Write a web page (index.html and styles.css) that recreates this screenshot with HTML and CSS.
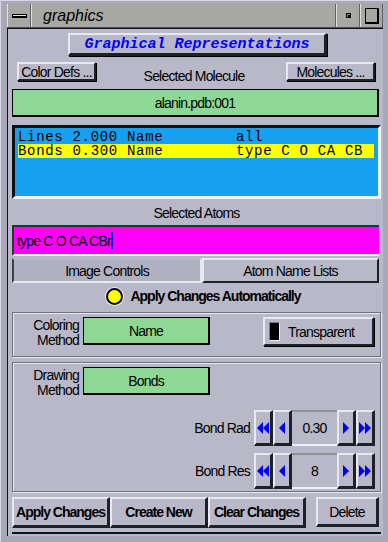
FILE: index.html
```html
<!DOCTYPE html>
<html lang="en">
<head>
  <meta charset="UTF-8" />
  <title>graphics</title>
  <link rel="stylesheet" href="styles.css">
</head>
<body>
  <div class="window">
    <!-- Title Bar -->
    <div class="titlebar">
      <div class="tb-btn tb-menu"><span class="bar"></span></div>
      <div class="tb-title">graphics</div>
      <div class="tb-btn tb-min"><span class="dot"></span></div>
      <div class="tb-btn tb-max"><span class="box"></span></div>
    </div>

    <!-- Content -->
    <div class="content">
      <div class="head-row">
        <div class="btn head-btn">Graphical Representations</div>
      </div>

      <div class="mol-row">
        <div class="btn small-btn">Color Defs ...</div>
        <div class="label mol-label">Selected Molecule</div>
        <div class="btn small-btn mol-btn">Molecules ...</div>
      </div>

      <div class="green-field wide">alanin.pdb:001</div>

      <div class="list">
        <div class="list-row">Lines 2.000 Name        all</div>
        <div class="list-row selected">Bonds 0.300 Name        type C O CA CB</div>
      </div>

      <div class="label atoms-label">Selected Atoms</div>

      <div class="text-field">type C O CA CBr<span class="cursor"></span></div>

      <div class="tabs">
        <div class="tab active">Image Controls</div>
        <div class="tab">Atom Name Lists</div>
      </div>

      <div class="radio-row">
        <span class="radio"></span>
        <span class="bold">Apply Changes Automatically</span>
      </div>

      <div class="group group-color">
        <div class="method-row">
          <div class="label method-label">Coloring<br>Method</div>
          <div class="green-field method-btn">Name</div>
          <div class="btn toggle"><span class="indicator"></span>Transparent</div>
        </div>
      </div>

      <div class="group group-draw">
        <div class="method-row">
          <div class="label method-label">Drawing<br>Method</div>
          <div class="green-field method-btn">Bonds</div>
        </div>

        <div class="spin-row">
          <div class="label spin-label">Bond Rad</div>
          <div class="spinner">
            <div class="btn spin-btn"><svg width="12" height="12" viewBox="0 0 12 12"><path d="M6 0 L0 6 L6 12 Z M12 0 L6 6 L12 12 Z" fill="#0000ff"/></svg></div>
            <div class="btn spin-btn"><svg width="6" height="12" viewBox="0 0 6 12"><path d="M6 0 L0 6 L6 12 Z" fill="#0000ff"/></svg></div>
            <div class="spin-value">0.30</div>
            <div class="btn spin-btn"><svg width="6" height="12" viewBox="0 0 6 12"><path d="M0 0 L6 6 L0 12 Z" fill="#0000ff"/></svg></div>
            <div class="btn spin-btn"><svg width="12" height="12" viewBox="0 0 12 12"><path d="M0 0 L6 6 L0 12 Z M6 0 L12 6 L6 12 Z" fill="#0000ff"/></svg></div>
          </div>
        </div>

        <div class="spin-row">
          <div class="label spin-label">Bond Res</div>
          <div class="spinner">
            <div class="btn spin-btn"><svg width="12" height="12" viewBox="0 0 12 12"><path d="M6 0 L0 6 L6 12 Z M12 0 L6 6 L12 12 Z" fill="#0000ff"/></svg></div>
            <div class="btn spin-btn"><svg width="6" height="12" viewBox="0 0 6 12"><path d="M6 0 L0 6 L6 12 Z" fill="#0000ff"/></svg></div>
            <div class="spin-value">8</div>
            <div class="btn spin-btn"><svg width="6" height="12" viewBox="0 0 6 12"><path d="M0 0 L6 6 L0 12 Z" fill="#0000ff"/></svg></div>
            <div class="btn spin-btn"><svg width="12" height="12" viewBox="0 0 12 12"><path d="M0 0 L6 6 L0 12 Z M6 0 L12 6 L6 12 Z" fill="#0000ff"/></svg></div>
          </div>
        </div>
      </div>

      <div class="actions">
        <div class="btn act-btn bold">Apply Changes</div>
        <div class="btn act-btn bold">Create New</div>
        <div class="btn act-btn bold">Clear Changes</div>
        <div class="btn act-btn delete">Delete</div>
      </div>
    </div>
  </div>
</body>
</html>
```

FILE: styles.css
```css
* {
  margin: 0;
  padding: 0;
  box-sizing: border-box;
}

body {
  width: 388px;
  height: 542px;
  overflow: hidden;
  background: #a4a4b4;
  font-family: 'Liberation Sans', Arial, sans-serif;
  font-size: 14px;
  letter-spacing: -0.8px;
  color: #000;
}

/* Window frame */
.window {
  width: 388px;
  height: 542px;
  padding: 3px 5px 6px 6px;
  display: flex;
  flex-direction: column;
  background: #a8a8b8;
  border-left: 1px solid #d8d8e4;
  border-top: 1px solid #d8d8e4;
}

.titlebar {
  height: 24px;
  display: flex;
  background: #a8a8a2;
  border-bottom: 1px solid #505058;
}

.tb-btn {
  width: 24px;
  display: flex;
  align-items: center;
  justify-content: center;
  border-left: 1px solid #e0e0e0;
  border-right: 1px solid #606068;
}

.tb-menu .bar {
  width: 15px;
  height: 4px;
  border: 1px solid #000;
  background: #e8e8e8;
  border-bottom-width: 2px;
}

.tb-title {
  flex: 1;
  padding-left: 11px;
  font-style: italic;
  font-size: 16px;
  letter-spacing: 0;
  line-height: 24px;
  border-left: 1px solid #e0e0e0;
  border-right: 1px solid #606068;
}

.tb-min .dot {
  width: 5px;
  height: 5px;
  background: #000;
  border: 1px solid #000;
  box-shadow: inset 1px 1px 0 #888;
}

.tb-max {
  width: 23px;
}

.tb-max .box {
  width: 14px;
  height: 16px;
  border: 1px solid #000;
  border-right-width: 2px;
  border-bottom-width: 2px;
}

/* Content area */
.content {
  flex: 1;
  background: #b8b8c8;
  border-top: 1px solid #101018;
  border-left: 1px solid #101018;
  display: flex;
  flex-direction: column;
  padding: 4px 2px 0 4px;
}

/* Bevel button */
.btn {
  background: #b8b8c8;
  border: 2px solid;
  border-color: #e8e8f0 #202028 #202028 #e8e8f0;
  box-shadow: 1px 1px 0 #000;
  display: flex;
  align-items: center;
  justify-content: center;
  white-space: nowrap;
}

.label {
  white-space: nowrap;
}

.bold {
  font-weight: bold;
  letter-spacing: -1px;
}

.head-row {
  display: flex;
  justify-content: center;
  padding-left: 2px;
}

.head-btn {
  width: 259px;
  height: 23px;
  font-family: 'Liberation Mono', monospace;
  font-weight: bold;
  font-style: italic;
  font-size: 15px;
  letter-spacing: 0;
  color: #0000ff;
  border-right-width: 3px;
  border-bottom-width: 3px;
}

.mol-row {
  display: flex;
  align-items: flex-end;
  justify-content: space-between;
  margin-top: 6px;
  padding: 0 6px 0 5px;
}

.small-btn {
  width: 79px;
  height: 19px;
}

.mol-btn {
  width: 89px;
}

.mol-label {
  line-height: 14px;
  margin-bottom: -2px;
  padding-left: 6px;
}

.green-field {
  background: #8cd894;
  border: 1px solid #000;
  border-right-width: 2px;
  border-bottom-width: 2px;
  display: flex;
  align-items: center;
  justify-content: center;
}

.wide {
  height: 28px;
  margin-top: 8px;
  margin-right: 2px;
}

/* List */
.list {
  height: 74px;
  margin-top: 8px;
  background: #18a0f0;
  border: 3px solid;
  border-color: #101018 #f0f0f8 #f0f0f8 #101018;
  padding: 2px 4px 0 3px;
  font-family: 'Liberation Mono', monospace;
  font-size: 14px;
  letter-spacing: 0.68px;
}

.list-row {
  height: 14px;
  line-height: 14px;
  white-space: pre;
}

.list-row.selected {
  background: #ffff00;
}

.atoms-label {
  text-align: center;
  margin-top: 6px;
  line-height: 16px;
}

.text-field {
  height: 31px;
  margin-top: 4px;
  margin-right: 2px;
  background: #ff00ff;
  border-top: 2px solid #303038;
  border-left: 2px solid #303038;
  border-bottom: 2px solid #f0f0f8;
  display: flex;
  align-items: center;
  padding-left: 3px;
}

.cursor {
  width: 2px;
  height: 17px;
  background: #0000ff;
}

/* Tabs */
.tabs {
  display: flex;
  height: 25px;
  margin-top: 2px;
  margin-right: 2px;
}

.tab {
  flex: 1;
  display: flex;
  align-items: center;
  justify-content: center;
  border: 2px solid;
  border-color: #e8e8f0 #202028 #202028 #e8e8f0;
}

.tab.active {
  flex: 0 0 190px;
  background: #b0b0c0;
  border-color: #b8b8c8 #e8e8f0 #e8e8f0 #404048;
}

.radio-row {
  display: flex;
  align-items: center;
  justify-content: center;
  gap: 7px;
  height: 26px;
  padding-left: 14px;
}

.radio {
  width: 17px;
  height: 17px;
  border-radius: 50%;
  background: #ffff00;
  border: 2px solid #000;
  box-shadow: 0 0 0 1px #f0f0f8;
}

/* Groups */
.group {
  border: 1px solid #707080;
  box-shadow: inset 1px 1px 0 #e8e8f0, 1px 1px 0 #e8e8f0;
  padding: 4px 5px 0 6px;
}

.group-color {
  height: 45px;
  margin-top: 3px;
}

.group-draw {
  height: 130px;
  margin-top: 5px;
}

.method-row {
  display: flex;
  align-items: flex-start;
}

.method-label {
  width: 60px;
  text-align: right;
  line-height: 15px;
  margin-top: 1px;
}

.method-btn {
  width: 127px;
  height: 28px;
  margin-left: 4px;
}

.toggle {
  width: 111px;
  height: 29px;
  margin-left: auto;
  margin-right: 1px;
  justify-content: flex-start;
  padding-left: 4px;
  gap: 8px;
}

.indicator {
  width: 11px;
  height: 19px;
  background: #000;
  border: 1px solid #787888;
  border-right-color: #f0f0f8;
  border-bottom-color: #f0f0f8;
}

/* Spinners */
.spin-row {
  display: flex;
  align-items: center;
  justify-content: flex-end;
  margin-top: 7px;
}

.spin-row:nth-child(2) {
  margin-top: 12px;
}

.spin-label {
  margin-right: 4px;
}

.spinner {
  display: flex;
  height: 36px;
}

.spin-btn {
  width: 19px;
  border-right-width: 3px;
  border-bottom-width: 3px;
  box-shadow: none;
}

.spin-value {
  width: 45px;
  display: flex;
  align-items: center;
  justify-content: center;
  border-bottom: 2px solid #f0f0f8;
  border-top: 2px solid #909098;
}

/* Action buttons */
.actions {
  display: flex;
  align-items: flex-start;
  margin-top: 5px;
  height: 37px;
  border-bottom: 2px solid #101018;
}

.act-btn {
  width: 98px;
  height: 31px;
  border-right-width: 3px;
  border-bottom-width: 3px;
  box-shadow: none;
}

.act-btn.delete {
  width: 63px;
  height: 30px;
  margin-left: 10px;
}
```
